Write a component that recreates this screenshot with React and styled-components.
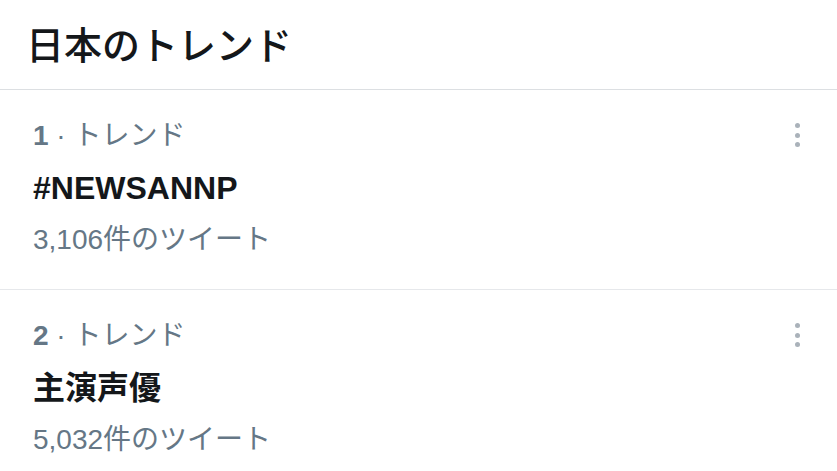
import React from "react";
import styled, { createGlobalStyle } from "styled-components";

const GlobalStyle = createGlobalStyle`
    body {
        margin: 0;
        background: #ffffff;
        font-family: "Liberation Sans", "Noto Sans CJK JP", sans-serif;
    }
`;

const Panel = styled.div`
    width: 837px;
    height: 471px;
    overflow: hidden;
    background: #ffffff;
`;

const Header = styled.div`
    height: 90px;
    display: flex;
    align-items: center;
    padding: 0 26px 4px;
    box-sizing: border-box;
    border-bottom: 1.5px solid #dcdfe2;
`;

const Title = styled.h2`
    margin: 0;
    font-size: 38px;
    font-weight: 500;
    color: #14171a;
`;

const TrendRow = styled.div`
    display: flex;
    justify-content: space-between;
    align-items: flex-start;
    height: 200px;
    padding: 22px 33px 0 33px;
    box-sizing: border-box;
    border-bottom: ${(p) => (p.last ? "none" : "1.5px solid #e6e8eb")};
`;

const Info = styled.div`
    display: flex;
    flex-direction: column;
`;

const Meta = styled.div`
    font-size: 28px;
    line-height: 48px;
    margin-top: ${(p) => p.$gap || 0}px;
    color: #657786;

    b {
        font-weight: 700;
    }
`;

const Name = styled.div`
    font-size: 32px;
    line-height: 50px;
    margin-top: 3px;
    font-weight: 700;
    color: #14171a;
`;

const MoreButton = styled.div`
    display: flex;
    flex-direction: column;
    align-items: center;
    gap: 4.5px;
    margin-top: 11px;
    margin-right: 4px;

    span {
        width: 5px;
        height: 5px;
        border-radius: 50%;
        background: #aab2ba;
    }
`;

const trends = [
    { rank: 1, name: "#NEWSANNP", count: "3,106" },
    { rank: 2, name: "主演声優", count: "5,032" },
];

export default function App() {
    return (
        <Panel>
            <GlobalStyle />
            <Header>
                <Title>日本のトレンド</Title>
            </Header>
            {trends.map((t, i) => (
                <TrendRow key={t.rank} last={i === trends.length - 1}>
                    <Info>
                        <Meta>
                            <b>{t.rank}</b> · トレンド
                        </Meta>
                        <Name>{t.name}</Name>
                        <Meta $gap={3}>{t.count}件のツイート</Meta>
                    </Info>
                    <MoreButton>
                        <span />
                        <span />
                        <span />
                    </MoreButton>
                </TrendRow>
            ))}
        </Panel>
    );
}
